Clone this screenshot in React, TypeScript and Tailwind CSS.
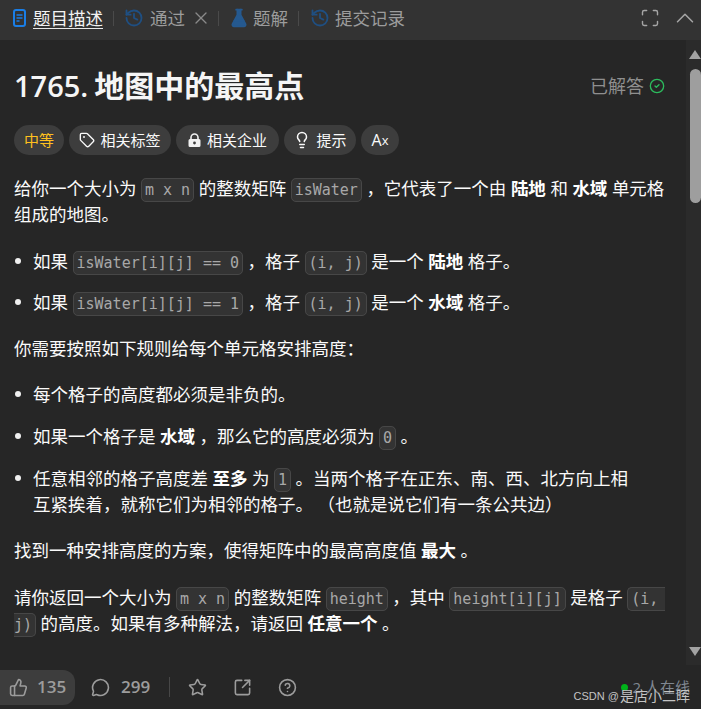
import React from 'react';
import {
  History,
  X,
  FlaskConical,
  Maximize,
  ChevronUp,
  Tag,
  Lightbulb,
  CircleCheck,
  ThumbsUp,
  MessageCircle,
  Star,
  SquareArrowOutUpRight,
  CircleHelp,
} from 'lucide-react';

const FONT = '"Open Sans", "Noto Sans CJK SC", sans-serif';

function Code({ children }: { children: React.ReactNode }) {
  return (
    <code className="mx-[4.5px] whitespace-pre-wrap rounded-[5px] border border-[#474747] bg-[#333333] px-[3px] py-[2px] font-['DejaVu_Sans_Mono',monospace] text-[15px] leading-none text-[#a8a8a8]">
      {children}
    </code>
  );
}

function B({ children }: { children: React.ReactNode }) {
  return <strong className="mx-[4.5px] font-bold text-white">{children}</strong>;
}

function Li({ children, className }: { children: React.ReactNode; className: string }) {
  return (
    <div className={`flex pr-[30px] ${className}`}>
      <span className="flex h-[26px] w-[19px] shrink-0 items-center">
        <span className="ml-[1px] h-[6px] w-[6px] rounded-full bg-[#f0f0f0]" />
      </span>
      <p className="min-w-0 flex-1">{children}</p>
    </div>
  );
}

function Chip({ children, className }: { children: React.ReactNode; className: string }) {
  return (
    <div className={`flex h-[30px] items-center justify-center rounded-full bg-[#3d3d3d] text-[15px] ${className}`}>
      {children}
    </div>
  );
}

export default function App() {
  return (
    <div className="relative flex h-[709px] w-[701px] flex-col overflow-hidden bg-[#262626] text-[17.5px] leading-[26px] text-[#fafafa]" style={{ fontFamily: FONT }}>
      {/* Tabs */}
      <div className="flex h-10 shrink-0 items-center bg-[#333333] pb-[4px] pl-[13px] pr-[1px] text-[17.5px] text-[#9c9c9c]">
        <svg width="13" height="18" viewBox="0 0 13 18" fill="none" className="mr-[7px]">
          <rect x="1" y="1" width="11" height="16" rx="2" stroke="#1a7ee6" strokeWidth="2" />
          <path d="M3.5 6h6M3.5 9h6M3.5 12h3" stroke="#1a7ee6" strokeWidth="1.5" />
        </svg>
        <span className="border-b border-[#e8e8e8] leading-[20px] text-[#f2f2f2]">题目描述</span>
        <span className="ml-[10px] mr-[10px] h-[15px] w-px bg-[#4a4a4a]" />
        <History className="mr-[6px] h-[20px] w-[20px] text-[#1f4f82]" strokeWidth={2.2} />
        <span>通过</span>
        <X className="ml-[6px] h-[20px] w-[20px] text-[#8a8a8a]" strokeWidth={1.6} />
        <span className="ml-[7px] mr-[10px] h-[15px] w-px bg-[#4a4a4a]" />
        <FlaskConical className="mr-[4px] h-[20px] w-[20px] fill-[#25598f] text-[#25598f]" />
        <span>题解</span>
        <span className="ml-[10px] mr-[11px] h-[15px] w-px bg-[#4a4a4a]" />
        <History className="mr-[5px] h-[20px] w-[20px] text-[#1f4f82]" strokeWidth={2.2} />
        <span>提交记录</span>
        <div className="ml-auto flex items-center gap-[10px] text-[#a6a6a6]">
          <Maximize className="h-[20px] w-[20px]" strokeWidth={1.7} />
          <ChevronUp className="h-[30px] w-[30px]" strokeWidth={1.2} />
        </div>
      </div>

      <div className="flex min-h-0 flex-1">
        {/* Description */}
        <div className="min-w-0 flex-1 overflow-hidden pl-[14px] pr-[21px] pt-[27px]">
          <div className="flex h-[38px] items-center justify-between">
            <h1 className="text-[30px] font-bold leading-[38px] text-[#f5f5f5]">
              <span className="text-[29px] font-semibold">1765.</span>
              <span className="ml-[6px]">地图中的最高点</span>
            </h1>
            <div className="flex items-center gap-[5px] text-[18px] text-[#8f8f8f]">
              <span>已解答</span>
              <CircleCheck className="h-[16px] w-[16px] text-[#2cbb5d]" />
            </div>
          </div>

          <div className="mt-[20px] flex gap-[5px]">
            <Chip className="w-[50px] text-[#ffc01e]">中等</Chip>
            <Chip className="w-[102px] gap-[5px]">
              <Tag className="h-[16px] w-[16px]" />
              相关标签
            </Chip>
            <Chip className="w-[103px] gap-[6px]">
              <svg width="13" height="15" viewBox="0 0 13 15">
                <path d="M3 6V4.5a3.5 3.5 0 0 1 7 0V6" fill="none" stroke="#f2f2f2" strokeWidth="1.6" />
                <path fillRule="evenodd" d="M2 6h9a1.5 1.5 0 0 1 1.5 1.5v5A1.5 1.5 0 0 1 11 14H2a1.5 1.5 0 0 1-1.5-1.5v-5A1.5 1.5 0 0 1 2 6Zm4.5 2.6a1.4 1.4 0 1 0 0 2.8 1.4 1.4 0 0 0 0-2.8Z" fill="#f2f2f2" />
              </svg>
              相关企业
            </Chip>
            <Chip className="w-[72px] gap-[5px]">
              <Lightbulb className="h-[18px] w-[18px]" />
              提示
            </Chip>
            <Chip className="w-[38px]">
              <span className="text-[16px]">A</span>
              <span className="text-[13px]">x</span>
            </Chip>
          </div>

          <p className="mt-[20px]">
            给你一个大小为<Code>m x n</Code>的整数矩阵<Code>isWater</Code>，它代表了一个由<B>陆地</B>和<B>水域</B>单元格组成的地图。
          </p>

          <Li className="mt-[21px]">
            如果<Code>isWater[i][j] == 0</Code>，格子<Code>(i, j)</Code>是一个<B>陆地</B>格子。
          </Li>
          <Li className="mt-[15px]">
            如果<Code>isWater[i][j] == 1</Code>，格子<Code>(i, j)</Code>是一个<B>水域</B>格子。
          </Li>

          <p className="mt-[20px]">你需要按照如下规则给每个单元格安排高度：</p>

          <Li className="mt-[20px]">每个格子的高度都必须是非负的。</Li>
          <Li className="mt-[16px]">
            如果一个格子是<B>水域</B>，那么它的高度必须为<Code>0</Code>。
          </Li>
          <Li className="mt-[16px]">
            任意相邻的格子高度差<B>至多</B>为<Code>1</Code>。当两个格子在正东、南、西、北方向上相互紧挨着，就称它们为相邻的格子。 （也就是说它们有一条公共边）
          </Li>

          <p className="mt-[20px]">
            找到一种安排高度的方案，使得矩阵中的最高高度值<B>最大</B>。
          </p>

          <p className="mt-[19px] overflow-hidden py-[2px]">
            请你返回一个大小为<Code>m x n</Code>的整数矩阵<Code>height</Code>，其中<Code>height[i][j]</Code>是格子<Code>(i, j)</Code>的高度。如果有多种解法，请返回<B>任意一个</B>。
          </p>
        </div>

        {/* Scrollbar */}
        <div className="flex w-[15px] shrink-0 flex-col items-end bg-[#2b2b2b] pt-[10px]">
          <span className="h-0 w-0 border-x-[6px] border-b-[9px] border-x-transparent border-b-[#a3a3a3]" />
          <span className="mt-[10px] h-[134px] w-[11px] rounded-full bg-[#9e9e9e]" />
          <span className="mb-[9px] mt-auto h-0 w-0 border-x-[6px] border-t-[9px] border-x-transparent border-t-[#a3a3a3]" />
        </div>
      </div>

      {/* Footer */}
      <div className="flex h-[44px] shrink-0 items-center text-[17px] font-semibold text-[#9c9c9c]">
        <div className="flex h-[35px] w-[75px] items-center gap-[9px] rounded-r-xl bg-[#3d3d3d] pl-[9px]">
          <ThumbsUp className="h-[19px] w-[19px]" />
          <span>135</span>
        </div>
        <MessageCircle className="ml-[16px] h-[19px] w-[19px]" />
        <span className="ml-[11px]">299</span>
        <span className="ml-[19px] h-[20px] w-px bg-[#474747]" />
        <Star className="ml-[18px] h-[19px] w-[19px]" />
        <SquareArrowOutUpRight className="ml-[26px] h-[19px] w-[19px]" />
        <CircleHelp className="ml-[26px] h-[19px] w-[19px]" />
        <div className="ml-auto mr-[11px] flex items-center gap-[5px] self-start pt-[12px] text-[15px] font-normal leading-[20px] text-[#7f8791]">
          <span className="h-[7px] w-[7px] rounded-full bg-[#00b31a]" />
          <span>2 人在线</span>
        </div>
      </div>

      {/* CSDN watermark */}
      <div className="absolute bottom-[3px] right-[11px] flex items-center text-[14px] leading-[20px] text-[#c4c4c4]">
        <span className="mr-[1px] font-['Liberation_Sans',sans-serif] text-[11px] font-normal">CSDN @</span>
        <span>是店小二晖</span>
      </div>
    </div>
  );
}
